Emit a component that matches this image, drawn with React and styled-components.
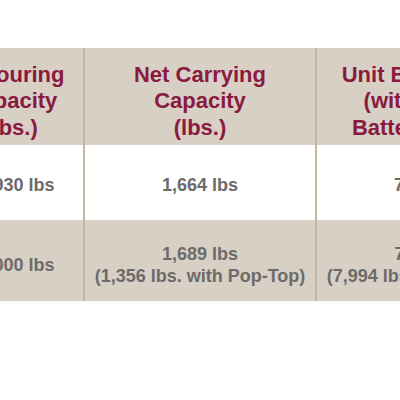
import styled, { createGlobalStyle } from "styled-components";

const GlobalStyle = createGlobalStyle`
  html, body {
    margin: 0;
    padding: 0;
    background: #ffffff;
  }
  body {
    font-family: "Liberation Sans", Arial, sans-serif;
  }
`;

const Page = styled.div`
  width: 400px;
  height: 400px;
  overflow: hidden;
  padding-top: 48px;
  box-sizing: border-box;
`;

const Table = styled.div`
  display: flex;
  flex-direction: column;
  width: max-content;
  margin-left: -60px;
`;

const Row = styled.div`
  display: grid;
  grid-template-columns: 145px 232px 232px;
  height: ${(props) => props.height}px;
  background: ${(props) => (props.shaded ? "#d8d0c5" : "#ffffff")};
`;

const Cell = styled.div`
  display: flex;
  flex-direction: column;
  align-items: center;
  justify-content: center;
  text-align: center;
  border-right: 2px solid #c0b6a3;
  padding-top: ${(props) => props.offset || 0}px;
  box-sizing: border-box;
`;

const HeadText = styled.div`
  font-size: 22px;
  line-height: 26.5px;
  font-weight: 700;
  color: #8a1a40;
  white-space: nowrap;
`;

const DataText = styled.div`
  font-size: 18px;
  line-height: 22px;
  font-weight: 700;
  color: #6d6b69;
  white-space: nowrap;
`;

const headers = [
  ["In Touring", "Capacity", "(lbs.)"],
  ["Net Carrying", "Capacity", "(lbs.)"],
  ["Unit Base Weight", "(with Lithium", "Batteries) (lbs.)"],
];

const rows = [
  { shaded: false, height: 75, offset: 4, cells: [["10,930 lbs"], ["1,664 lbs"], ["7,266 lbs"]] },
  {
    shaded: true,
    height: 81,
    offset: 8,
    cells: [
      ["10,000 lbs"],
      ["1,689 lbs", "(1,356 lbs. with Pop-Top)"],
      ["7,311 lbs", "(7,994 lbs. with Pop-Top)"],
    ],
  },
];

const App = () => (
  <>
    <GlobalStyle />
    <Page>
      <Table>
        <Row shaded height={97}>
          {headers.map((lines, i) => (
            <Cell key={i} offset={10}>
              {lines.map((line) => (
                <HeadText key={line}>{line}</HeadText>
              ))}
            </Cell>
          ))}
        </Row>
        {rows.map((row, r) => (
          <Row key={r} shaded={row.shaded} height={row.height}>
            {row.cells.map((lines, i) => (
              <Cell key={i} offset={row.offset}>
                {lines.map((line) => (
                  <DataText key={line}>{line}</DataText>
                ))}
              </Cell>
            ))}
          </Row>
        ))}
      </Table>
    </Page>
  </>
);

export default App;
